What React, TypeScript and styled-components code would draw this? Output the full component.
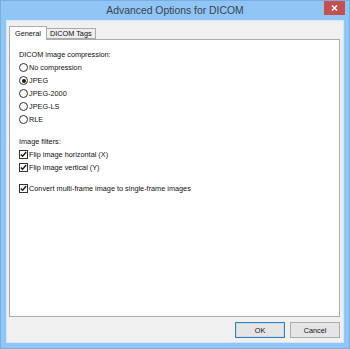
import styled, { createGlobalStyle } from 'styled-components';

const GlobalStyle = createGlobalStyle`
  html, body {
    margin: 0;
    padding: 0;
    width: 350px;
    height: 349px;
    overflow: hidden;
    background: #8fc6f5;
  }
`;

const compressionOptions = ['No compression', 'JPEG', 'JPEG-2000', 'JPEG-LS', 'RLE'];

const Window = styled.div`
  width: 350px;
  height: 349px;
  box-sizing: border-box;
  display: flex;
  flex-direction: column;
  background: #8fc6f5;
  border: 1px solid #7aaee0;
  font-family: 'Liberation Sans', Arial, sans-serif;
`;

const TitleBar = styled.div`
  height: 20px;
  display: flex;
  align-items: flex-start;
  padding-right: 4px;
`;

const TitleSpacer = styled.div`
  width: 21px;
  margin-left: 4px;
`;

const Title = styled.div`
  flex: 1;
  text-align: center;
  font-size: 10.4px;
  line-height: 20px;
  color: #3b424b;
`;

const CloseButton = styled.div`
  width: 21px;
  height: 14px;
  flex: none;
  display: block;
  line-height: 0;
`;

const Body = styled.div`
  flex: 1;
  margin: 0 6px 6px;
  background: #f0f0f0;
  box-shadow: 0 0 0 1px #cfe6fb;
  display: flex;
  flex-direction: column;
  padding: 4px 3px 4px 2px;
  font-size: 7.3px;
  color: #111111;
`;

const TabStrip = styled.div`
  display: flex;
  align-items: flex-end;
  height: 14px;
`;

const Tab = styled.div<{ $active?: boolean }>`
  height: ${(p) => (p.$active ? 14 : 11)}px;
  padding: 0 ${(p) => (p.$active ? 5 : 3)}px;
  box-sizing: border-box;
  display: flex;
  align-items: center;
  background: ${(p) => (p.$active ? '#ffffff' : '#eeeeee')};
  border: 1px solid #acacac;
  border-bottom: ${(p) => (p.$active ? 'none' : '1px solid #acacac')};
  margin-left: ${(p) => (p.$active ? 0 : -1)}px;
  position: relative;
  z-index: ${(p) => (p.$active ? 1 : 0)};
  margin-bottom: ${(p) => (p.$active ? -1 : 0)}px;
`;

const Panel = styled.div`
  flex: 1;
  background: #ffffff;
  border: 1px solid #acacac;
  display: flex;
  flex-direction: column;
  padding: 8px 9px;
`;

const Heading = styled.div<{ $gap?: number }>`
  line-height: 13px;
  height: 13px;
  margin-top: ${(p) => p.$gap ?? 0}px;
`;

const OptionRow = styled.div<{ $gap?: number }>`
  display: flex;
  align-items: center;
  height: 13px;
  flex: none;
  gap: 1px;
  margin-top: ${(p) => p.$gap ?? 0}px;
`;

const RadioCircle = styled.span<{ $checked?: boolean }>`
  width: 9px;
  height: 9px;
  box-sizing: border-box;
  border-radius: 50%;
  border: 1px solid #333333;
  background: #ffffff;
  display: flex;
  align-items: center;
  justify-content: center;
  &::after {
    content: '';
    display: ${(p) => (p.$checked ? 'block' : 'none')};
    width: 4px;
    height: 4px;
    border-radius: 50%;
    background: #1a1a1a;
  }
`;

const CheckBox = styled.span`
  width: 9px;
  height: 9px;
  box-sizing: border-box;
  border: 1px solid #333333;
  background: #ffffff;
  display: flex;
  align-items: center;
  justify-content: center;
`;

const Footer = styled.div`
  display: flex;
  justify-content: flex-end;
  gap: 5px;
  margin-top: 5px;
`;

const Button = styled.div<{ $default?: boolean }>`
  width: 50px;
  height: 16px;
  box-sizing: border-box;
  display: flex;
  align-items: center;
  justify-content: center;
  background: #e5e5e5;
  border: 1px solid ${(p) => (p.$default ? '#3c7fb1' : '#acacac')};
  box-shadow: ${(p) => (p.$default ? 'inset 0 0 0 1px #c3def4' : 'none')};
`;

const CheckMark = () => (
  <svg width="7" height="7" viewBox="0 0 7 7">
    <path d="M0.8 3.4 L2.6 5.3 L6.2 1" fill="none" stroke="#1a1a1a" strokeWidth="1.4" />
  </svg>
);

const CloseIcon = () => (
  <svg width="21" height="14" viewBox="0 0 21 14">
    <rect x="0" y="0" width="21" height="14" fill="#c74f4f" />
    <path d="M8 4.5 L13 9.5 M13 4.5 L8 9.5" stroke="#ffffff" strokeWidth="1.6" />
  </svg>
);

const App = () => {
  return (
    <>
      <GlobalStyle />
      <Window>
        <TitleBar>
          <TitleSpacer />
          <Title>Advanced Options for DICOM</Title>
          <CloseButton>
            <CloseIcon />
          </CloseButton>
        </TitleBar>
        <Body>
          <TabStrip>
            <Tab $active>General</Tab>
            <Tab>DICOM Tags</Tab>
          </TabStrip>
          <Panel>
            <Heading>DICOM image compression:</Heading>
            {compressionOptions.map((opt) => (
              <OptionRow key={opt}>
                <RadioCircle $checked={opt === 'JPEG'} />
                <span>{opt}</span>
              </OptionRow>
            ))}
            <Heading $gap={9}>Image filters:</Heading>
            <OptionRow>
              <CheckBox>
                <CheckMark />
              </CheckBox>
              <span>Flip image horizontal (X)</span>
            </OptionRow>
            <OptionRow>
              <CheckBox>
                <CheckMark />
              </CheckBox>
              <span>Flip image vertical (Y)</span>
            </OptionRow>
            <OptionRow $gap={8}>
              <CheckBox>
                <CheckMark />
              </CheckBox>
              <span>Convert multi-frame image to single-frame images</span>
            </OptionRow>
          </Panel>
          <Footer>
            <Button $default>OK</Button>
            <Button>Cancel</Button>
          </Footer>
        </Body>
      </Window>
    </>
  );
};

export default App;
